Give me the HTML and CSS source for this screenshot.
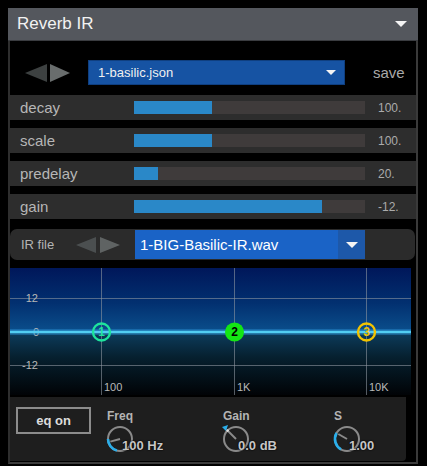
FILE: index.html
```html
<!DOCTYPE html>
<html>
<head>
    <title>Reverb IR</title>
    <meta charset="utf-8">
    <link rel="stylesheet" href="styles.css">
</head>
<body>
    <div class="plugin">
        <div class="head">
            <span class="title">Reverb IR</span>
            <span class="caret"></span>
        </div>
        <div class="body">
            <div class="preset">
                <div class="arrows">
                    <span class="arrow left"></span>
                    <span class="arrow right"></span>
                </div>
                <div class="select">
                    <span>1-basilic.json</span>
                    <span class="caret small"></span>
                </div>
                <span class="save">save</span>
            </div>
            <ul class="params">
                <li class="param">
                    <span class="name">decay</span>
                    <span class="track"><span class="fill" style="width: 33.8%"></span></span>
                    <span class="value">100.</span>
                </li>
                <li class="param">
                    <span class="name">scale</span>
                    <span class="track"><span class="fill" style="width: 33.8%"></span></span>
                    <span class="value">100.</span>
                </li>
                <li class="param">
                    <span class="name">predelay</span>
                    <span class="track"><span class="fill" style="width: 10.4%"></span></span>
                    <span class="value">20.</span>
                </li>
                <li class="param">
                    <span class="name">gain</span>
                    <span class="track"><span class="fill" style="width: 81.4%"></span></span>
                    <span class="value">-12.</span>
                </li>
            </ul>
            <div class="irfile">
                <span class="irlabel">IR file</span>
                <div class="arrows small">
                    <span class="arrow left"></span>
                    <span class="arrow right"></span>
                </div>
                <div class="irselect">
                    <span class="irname">1-BIG-Basilic-IR.wav</span>
                    <span class="irbutton"><span class="caret"></span></span>
                </div>
            </div>
            <svg class="eq" width="401" height="127" viewBox="0 0 401 127">
                <defs>
                    <linearGradient id="sky" x1="0" y1="0" x2="0" y2="1">
                        <stop offset="0" stop-color="#00175a"/>
                        <stop offset="0.55" stop-color="#023070"/>
                        <stop offset="1" stop-color="#0b4f8c"/>
                    </linearGradient>
                    <linearGradient id="deep" x1="0" y1="0" x2="0" y2="1">
                        <stop offset="0" stop-color="#0d3d5e"/>
                        <stop offset="0.4" stop-color="#06202f"/>
                        <stop offset="1" stop-color="#010306"/>
                    </linearGradient>
                </defs>
                <rect width="401" height="64" fill="url(#sky)"/>
                <rect y="64" width="401" height="63" fill="url(#deep)"/>
                <g stroke="#8d96a0" stroke-opacity="0.6" stroke-width="1">
                    <line x1="0" y1="30.5" x2="401" y2="30.5"/>
                    <line x1="0" y1="97.5" x2="401" y2="97.5"/>
                    <line x1="91.5" y1="0" x2="91.5" y2="127"/>
                    <line x1="224.5" y1="0" x2="224.5" y2="127"/>
                    <line x1="356.5" y1="0" x2="356.5" y2="127"/>
                </g>
                <g class="axis">
                    <text x="28" y="34" text-anchor="end">12</text>
                    <text x="29" y="68" text-anchor="end">0</text>
                    <text x="28" y="101" text-anchor="end">-12</text>
                    <text x="94" y="123">100</text>
                    <text x="227" y="123">1K</text>
                    <text x="359" y="123">10K</text>
                </g>
                <line x1="0" y1="64" x2="401" y2="64" stroke="#2a8fd0" stroke-opacity="0.45" stroke-width="6"/>
                <line x1="0" y1="64" x2="401" y2="64" stroke="#52cdf2" stroke-width="2.5"/>
                <g class="nodes">
                    <circle cx="91.5" cy="64" r="8.5" fill="none" stroke="#1ee49c" stroke-width="2.4"/>
                    <text x="91.5" y="68" fill="#1ee49c">1</text>
                    <circle cx="224.5" cy="64" r="9.5" fill="#14e614"/>
                    <text x="224.5" y="68" fill="#000">2</text>
                    <circle cx="356.5" cy="64" r="8.5" fill="none" stroke="#f2c300" stroke-width="2.4"/>
                    <text x="356.5" y="68" fill="#f2c300">3</text>
                </g>
            </svg>
            <div class="controls">
                <span class="eqbutton">eq on</span>
                <div class="knob freq">
                    <span class="klabel">Freq</span>
                    <div class="dial">
                        <svg width="30" height="30" viewBox="0 0 30 30">
                            <circle cx="15" cy="15" r="12" fill="none" stroke="#8a8a8a" stroke-width="2"/>
                            <path d="M11.9 26.6 A12 12 0 0 1 3 15" fill="none" stroke="#2aaeea" stroke-width="2.6"/>
                            <line x1="15" y1="15" x2="5.3" y2="17.6" stroke="#8a8a8a" stroke-width="2"/>
                        </svg>
                        <span class="kvalue">100 Hz</span>
                    </div>
                </div>
                <div class="knob gain">
                    <span class="klabel">Gain</span>
                    <div class="dial">
                        <svg width="30" height="30" viewBox="0 0 30 30">
                            <circle cx="15" cy="15" r="12" fill="none" stroke="#8a8a8a" stroke-width="2"/>
                            <polygon points="1,3 7,1 5,7" fill="#2aaeea"/>
                            <line x1="15" y1="15" x2="6.5" y2="6.5" stroke="#8a8a8a" stroke-width="2"/>
                            <circle cx="6.6" cy="6.6" r="1.3" fill="#e0e0e0"/>
                        </svg>
                        <span class="kvalue">0.0 dB</span>
                    </div>
                </div>
                <div class="knob s">
                    <span class="klabel">S</span>
                    <div class="dial">
                        <svg width="30" height="30" viewBox="0 0 30 30">
                            <circle cx="15" cy="15" r="12" fill="none" stroke="#8a8a8a" stroke-width="2"/>
                            <path d="M9 25.4 A12 12 0 0 1 4.6 9" fill="none" stroke="#2aaeea" stroke-width="2.6"/>
                            <line x1="15" y1="15" x2="6.3" y2="10" stroke="#8a8a8a" stroke-width="2"/>
                        </svg>
                        <span class="kvalue">1.00</span>
                    </div>
                </div>
            </div>
        </div>
    </div>
</body>
</html>
```

FILE: styles.css
```css
body{
    margin: 0;
    background: #000;
    font-family: "Liberation Sans", Arial, sans-serif;
}

.plugin{
    margin: 8px 0 0 8px;
    width: 410px;
}

.head{
    display: flex;
    align-items: center;
    justify-content: space-between;
    height: 33px;
    padding: 0 11px 0 9px;
    background: #54575d;
    border-bottom: 1px solid #3a3c40;
    box-sizing: border-box;
}

.title{
    font-size: 17px;
    color: #f2f2f2;
}

.caret{
    width: 0;
    height: 0;
    border-top: 6px solid #f4f4f4;
    border-left: 6px solid transparent;
    border-right: 6px solid transparent;
}

.caret.small{
    border-top-width: 5px;
    border-left-width: 5px;
    border-right-width: 5px;
}

.body{
    border-left: 2px solid #2e2e2e;
    border-right: 2px solid #3a3a3a;
    border-bottom: 2px solid #3c3c3c;
    padding-bottom: 1px;
}

/* preset row */
.preset{
    display: flex;
    align-items: center;
    height: 25px;
    padding: 19px 0 10px 15px;
}

.arrows{
    display: flex;
    align-items: center;
    gap: 3px;
}

.arrow{
    width: 0;
    height: 0;
    border-top: 9px solid transparent;
    border-bottom: 9px solid transparent;
}

.arrow.left{
    border-right: 22px solid #3d4141;
}

.arrow.right{
    border-left: 20px solid #696d6d;
}

.arrows.small{
    gap: 4px;
}

.arrows.small .arrow{
    border-top-width: 8px;
    border-bottom-width: 8px;
}

.arrows.small .arrow.left{
    border-right: 20px solid #4b4f50;
}

.arrows.small .arrow.right{
    border-left: 20px solid #5f6363;
}

.select{
    display: flex;
    align-items: center;
    justify-content: space-between;
    width: 257px;
    height: 25px;
    margin-left: 18px;
    padding: 0 8px 0 9px;
    box-sizing: border-box;
    background: #1653a3;
    border: 1px solid #0f3f80;
    font-size: 13px;
    color: #f0f0f0;
}

.save{
    margin-left: 28px;
    font-size: 15px;
    color: #a9a9a9;
}

/* parameter sliders */
.params{
    margin: 0;
    padding: 0;
    list-style: none;
}

.param{
    display: flex;
    align-items: center;
    height: 25px;
    margin-bottom: 8px;
    padding-left: 10px;
    background: #2d2d2d;
}

.name{
    width: 114px;
    font-size: 15px;
    color: #b6b6b6;
}

.track{
    width: 231px;
    height: 13px;
    background: #3f3b3b;
}

.fill{
    display: block;
    height: 100%;
    background: #2a88c8;
}

.value{
    margin-left: 13px;
    font-size: 12px;
    color: #ababab;
}

/* impulse file */
.irfile{
    display: flex;
    align-items: center;
    height: 31px;
    margin: 10px 1px 0 0;
    padding-left: 11px;
    background: #2b2b2b;
    border-radius: 7px;
}

.irlabel{
    width: 55px;
    font-size: 13px;
    color: #b4b4b4;
}

.irselect{
    display: flex;
    height: 29px;
    width: 230px;
    margin-left: 15px;
    background: #1a63c6;
}

.irname{
    flex: 1;
    align-self: center;
    padding-left: 5px;
    font-size: 15px;
    color: #fff;
}

.irbutton{
    display: flex;
    align-items: center;
    justify-content: center;
    width: 27px;
    background: #1d58a9;
}

/* eq graph */
.eq{
    display: block;
    margin-top: 8px;
}

.axis text{
    font-size: 11px;
    fill: #b8b8b8;
}

.nodes text{
    font-size: 12px;
    font-weight: bold;
    text-anchor: middle;
}

/* eq controls */
.controls{
    display: flex;
    align-items: flex-start;
    height: 64px;
    margin: 2px 10px 0 0;
    padding: 10px 0 0 6px;
    box-sizing: border-box;
    background: #1e1e1e;
    border-radius: 0 0 4px 0;
}

.eqbutton{
    width: 75px;
    height: 27px;
    line-height: 23px;
    border: 2px solid #8c8c8c;
    box-sizing: border-box;
    text-align: center;
    font-size: 13px;
    font-weight: bold;
    color: #dcdcdc;
}

.knob{
    display: flex;
    flex-direction: column;
}

.knob.freq{
    width: 116px;
    margin-left: 14px;
}

.knob.gain{
    width: 111px;
}

.klabel{
    margin: 2px 0 0 2px;
    line-height: 14px;
    font-size: 12px;
    font-weight: bold;
    color: #b4b4b4;
}

.dial{
    display: flex;
    align-items: flex-end;
    margin-top: 1px;
}

.dial svg{
    display: block;
}

.kvalue{
    margin: 0 0 1px -13px;
    line-height: 15px;
    font-size: 13px;
    font-weight: bold;
    color: #c6c6c6;
    text-shadow: 0 0 2px #000, 0 0 1px #000;
}
```
